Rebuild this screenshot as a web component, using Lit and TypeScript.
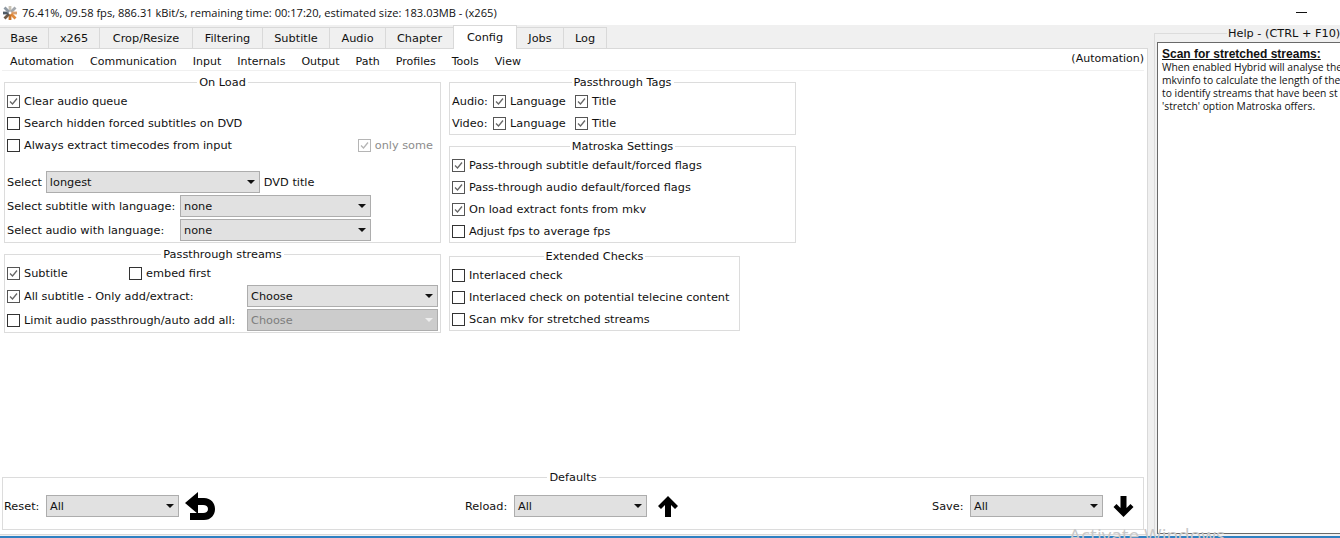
import { LitElement, html, css, svg } from "lit";
import { customElement } from "lit/decorators.js";

const TABS: [string, number][] = [["Base", 49], ["x265", 51], ["Crop/Resize", 93], ["Filtering", 70], ["Subtitle", 67], ["Audio", 56], ["Chapter", 68], ["Config", 64], ["Jobs", 47], ["Log", 43]];
const MENU = ["Automation", "Communication", "Input", "Internals", "Output", "Path", "Profiles", "Tools", "View"];

const check = (label: string, on = false, dis = false) => html`<label class="cb ${dis ? "dis" : ""}"><span class="box ${on ? "on" : ""}">${on ? svg`<svg width="11" height="11" viewBox="0 0 11 11"><path d="M2 5.500 4.500 8 9 2.500" fill="none" stroke="currentColor" stroke-width="1.300"/></svg>` : ""}</span><span class="t">${label}</span></label>`;
const combo = (label: string, cls: string, dis = false) => html`<div class="combo ${cls} ${dis ? "dis" : ""}"><span class="t">${label}</span><svg width="8" height="4" viewBox="0 0 8 4"><path d="M0 0h8L4 4z" fill="currentColor"/></svg></div>`;

@customElement("app-root")
export class AppRoot extends LitElement {
  static styles = css`
    :host { display: block; width: 1340px; height: 538px; overflow: hidden; position: relative; background: #fff; color: #111; font: 11.3px/16px "DejaVu Sans", sans-serif; }
    * { box-sizing: border-box; }
    .t { padding-top: 2px; }
    .title { height: 25px; display: flex; align-items: center; padding-left: 3px; gap: 5px; font: 11.1px "Open Sans", sans-serif; white-space: nowrap; }
    .min { margin-left: auto; width: 11px; height: 1px; background: #111; margin-right: 33px; margin-top: -1px; }
    .win { display: flex; height: 510px; }
    .main { width: 1148px; display: flex; flex-direction: column; background: #f0f0f0; flex: none; }
    .tabs { height: 23px; display: flex; align-items: flex-start; flex: none; position: relative; z-index: 1; }
    .tab { height: 21px; margin-top: 2px; padding-top: 1px; border: 1px solid #d9d9d9; border-left: 0; border-bottom: 0; display: flex; align-items: center; justify-content: center; flex: none; }
    .tab.on { height: 24px; margin-top: 0; background: #fff; border-left: 1px solid #d9d9d9; margin-left: -1px; }
    .pane { flex: 1; background: #fff; border: 1px solid #d9d9d9; border-left: 0; display: flex; flex-direction: column; min-height: 0; }
    .menu { height: 22px; display: flex; align-items: center; gap: 16px; margin: 0 3px 0 2px; padding: 4px 0 0 8px; border-bottom: 1px solid #f0f0f0; font-size: 11px; flex: none; }
    .menu .cur { margin-left: auto; margin-top: -6px; }
    .cols { display: flex; gap: 8px; padding: 11px 0 0 4px; flex: 1; align-items: flex-start; }
    .col { display: flex; flex-direction: column; gap: 11px; }
    .col.a { width: 437px; }
    .col.b { width: 347px; }
    .grp { position: relative; border: 1px solid #dcdcdc; padding: 7px 2px 0; }
    .grp > .lg { position: absolute; top: -8px; left: 0; right: 0; display: flex; justify-content: center; }
    .lg span { background: #fff; padding: 0 2px; }
    .row { height: 22px; display: flex; align-items: center; gap: 4px; white-space: nowrap; }
    .row.m2 { margin-top: 2px; }
    .row.m1 { margin-top: 1px; }
    .cb { display: inline-flex; align-items: center; gap: 4px; white-space: nowrap; }
    .box { width: 13px; height: 13px; border: 1px solid #333; background: #fff; display: flex; align-items: center; justify-content: center; flex: none; }
    .box.on { border-color: #555; color: #666; }
    .cb.dis { color: #8c8c8c; }
    .cb.dis .box { border-color: #b5b5b5; color: #b5b5b5; }
    .combo { height: 22px; border: 1px solid #adadad; background: #e1e1e1; display: flex; align-items: center; justify-content: space-between; padding: 0 4px 0 3px; flex: none; }
    .combo.dis { background: #cccccc; color: #7d7d7d; }
    .combo.dis svg { color: #eee; }
    .w214 { width: 214px; } .w191 { width: 191px; } .w133 { width: 133px; }
    .lang { width: 169px; }
    .push { margin-left: auto; margin-right: 5px; display: flex; }
    .onload { height: 161px; }
    .gap15 { height: 15px; }
    .ps { height: 79px; }
    .ps .sub { width: 118px; display: flex; }
    .ps .lbl { width: 236px; display: flex; }
    .tags { height: 53px; }
    .tags .who { width: 37px; }
    .tags .lw { width: 78px; display: flex; }
    .mat { height: 97px; }
    .ext { height: 75px; width: 291px; margin-top: 2px; }
    .def { height: 53px; margin: 0 3px 4px 2px; padding: 17px 0 0 1px; display: grid; grid-template-columns: 461px 467px auto; flex: none; }
    .dg { display: flex; align-items: center; height: 22px; gap: 4px; }
    .dg .rs { width: 38px; } .dg .rl { width: 45px; } .dg .sv { width: 34px; }
    .dg .back { margin-left: 2px; }
    .dg .up { margin-left: 7px; }
    .dg .down { margin-left: 6px; }
    .side { flex: 1; background: #f0f0f0; display: flex; padding: 8px 0 1px 6px; }
    .frame { position: relative; flex: 1; border-top: 1px solid #dcdcdc; border-left: 1px solid #dcdcdc; padding: 8px 0 0 2px; display: flex; min-width: 0; }
    .frame .hl { position: absolute; top: -8px; left: 72px; background: #f0f0f0; padding: 0 1px; white-space: nowrap; font-size: 11.3px; }
    .help { flex: 1; background: #fff; border: 1px solid #696969; border-right: 0; padding: 5px 0 0 4px; font: 10.3px/13px "Open Sans", sans-serif; white-space: nowrap; overflow: hidden; }
    .help b { font: bold 12px/13px "Liberation Sans", sans-serif; text-decoration: underline; display: block; }
    .foot { height: 3px; background: #f0f0f0; border-bottom: 2px solid #2f80c2; }
    .wm { position: absolute; left: 1069px; top: 522px; font: 19px "Open Sans", sans-serif; color: #c8c8c8; white-space: nowrap; }
  `;

  render() {
    return html`
      <div class="title">
        <svg width="14" height="14" viewBox="0 0 14 14"><g stroke-width="2.800">
          <path d="M7 5.500V0" stroke="#c9c3b5"/><path d="M8 6 12.500 1.500" stroke="#a3a8ad"/><path d="M8.500 7H14" stroke="#d9a070"/><path d="M8 8 12.500 12.500" stroke="#e0893a"/><path d="M7 8.500V14" stroke="#c8742c"/><path d="M6 8 1.500 12.500" stroke="#6d5a48"/><path d="M5.500 7H0" stroke="#4e5a66"/><path d="M6 6 1.500 1.500" stroke="#8f9aa3"/></g></svg>
        <span>76.41%, 09.58 fps, 886.31 kBit/s, remaining time: 00:17:20, estimated size: 183.03MB - (x265)</span>
        <i class="min"></i>
      </div>
      <div class="win">
        <div class="main">
          <div class="tabs">${TABS.map(([t, w]) => html`<div class="tab ${t === "Config" ? "on" : ""}" style="width:${w}px">${t}</div>`)}</div>
          <div class="pane">
            <div class="menu">${MENU.map((m) => html`<span>${m}</span>`)}<span class="cur">(Automation)</span></div>
            <div class="cols">
              <div class="col a">
                <div class="grp onload">
                  <div class="lg"><span>On Load</span></div>
                  <div class="row">${check("Clear audio queue", true)}</div>
                  <div class="row">${check("Search hidden forced subtitles on DVD")}</div>
                  <div class="row">${check("Always extract timecodes from input")}<span class="push">${check("only some", true, true)}</span></div>
                  <div class="gap15"></div>
                  <div class="row"><span class="t">Select</span>${combo("longest", "w214")}<span class="t">DVD title</span></div>
                  <div class="row m2"><span class="lang t">Select subtitle with language:</span>${combo("none", "w191")}</div>
                  <div class="row m2"><span class="lang t">Select audio with language:</span>${combo("none", "w191")}</div>
                </div>
                <div class="grp ps">
                  <div class="lg"><span>Passthrough streams</span></div>
                  <div class="row"><span class="sub">${check("Subtitle", true)}</span>${check("embed first")}</div>
                  <div class="row m1"><span class="lbl">${check("All subtitle - Only add/extract:", true)}</span>${combo("Choose", "w191")}</div>
                  <div class="row m2"><span class="lbl">${check("Limit audio passthrough/auto add all:")}</span>${combo("Choose", "w191", true)}</div>
                </div>
              </div>
              <div class="col b">
                <div class="grp tags">
                  <div class="lg"><span>Passthrough Tags</span></div>
                  <div class="row"><span class="who t">Audio:</span><span class="lw">${check("Language", true)}</span>${check("Title", true)}</div>
                  <div class="row"><span class="who t">Video:</span><span class="lw">${check("Language", true)}</span>${check("Title", true)}</div>
                </div>
                <div class="grp mat">
                  <div class="lg"><span>Matroska Settings</span></div>
                  <div class="row">${check("Pass-through subtitle default/forced flags", true)}</div>
                  <div class="row">${check("Pass-through audio default/forced flags", true)}</div>
                  <div class="row">${check("On load extract fonts from mkv", true)}</div>
                  <div class="row">${check("Adjust fps to average fps")}</div>
                </div>
                <div class="grp ext">
                  <div class="lg"><span>Extended Checks</span></div>
                  <div class="row">${check("Interlaced check")}</div>
                  <div class="row">${check("Interlaced check on potential telecine content")}</div>
                  <div class="row">${check("Scan mkv for stretched  streams")}</div>
                </div>
              </div>
            </div>
            <div class="grp def">
              <div class="lg"><span>Defaults</span></div>
              <div class="dg"><span class="rs t">Reset:</span>${combo("All", "w133")}
                <svg class="back" width="30" height="28" viewBox="0 0 30 28"><path d="M0 11 13 0V6H19C26 6 30 11 30 17C30 23 26 28 19 28H5V21H18C21 21 23 19.500 23 17C23 14.500 21 13 18 13H13V22Z" fill="#000"/></svg></div>
              <div class="dg"><span class="rl t">Reload:</span>${combo("All", "w133")}
                <svg class="up" width="20" height="21" viewBox="0 0 20 21"><path d="M10 0 20 10 17 13 13 9V21H7V9L3 13 0 10Z" fill="#000"/></svg></div>
              <div class="dg"><span class="sv t">Save:</span>${combo("All", "w133")}
                <svg class="down" width="21" height="21" viewBox="0 0 20 21"><path d="M10 21 20 11 17 8 13 12V0H7V12L3 8 0 11Z" fill="#000"/></svg></div>
            </div>
          </div>
        </div>
        <div class="side">
          <div class="frame">
            <span class="hl">Help - (CTRL + F10)</span>
            <div class="help"><b>Scan for stretched streams:</b>When enabled Hybrid will analyse the<br>mkvinfo to calculate the length of the<br>to identify streams that have been st<br>'stretch' option Matroska offers.</div>
          </div>
        </div>
      </div>
      <div class="foot"></div>
      <div class="wm">Activate Windows</div>
    `;
  }
}
